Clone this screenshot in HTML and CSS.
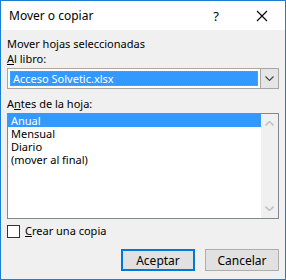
FILE: index.html
```html
<!DOCTYPE html>
<html lang="es">
<head>
    <meta charset="UTF-8">
    <title>Mover o copiar</title>
    <link rel="stylesheet" href="styles.css">
</head>
<body>
    <div class="window">
        <div class="titlebar">
            <span class="title">Mover o copiar</span>
            <span class="tb-btn">?</span>
            <span class="tb-btn">
                <svg width="12" height="12" viewBox="0 0 12 12"><path d="M1 1 L11 11 M11 1 L1 11" stroke="#000" stroke-width="1.1" fill="none"/></svg>
            </span>
        </div>
        <div class="content">
            <p class="label">Mover hojas seleccionadas</p>
            <p class="label"><u>A</u>l libro:</p>
            <div class="combo">
                <div class="combo-value"><span>Acceso Solvetic.xlsx</span></div>
                <div class="combo-arrow">
                    <svg width="9" height="5" viewBox="0 0 9 5"><path d="M0.5 0.5 L4.5 4.5 L8.5 0.5" stroke="#444" stroke-width="1.1" fill="none"/></svg>
                </div>
            </div>
            <p class="label">A<u>n</u>tes de la hoja:</p>
            <div class="listbox">
                <ul class="items">
                    <li class="selected">Anual</li>
                    <li>Mensual</li>
                    <li>Diario</li>
                    <li>(mover al final)</li>
                </ul>
                <div class="scrollbar">
                    <svg width="9" height="5" viewBox="0 0 9 5"><path d="M0.5 4.5 L4.5 0.5 L8.5 4.5" stroke="#c2c2c2" stroke-width="1.6" fill="none"/></svg>
                    <svg width="9" height="5" viewBox="0 0 9 5"><path d="M0.5 0.5 L4.5 4.5 L8.5 0.5" stroke="#c2c2c2" stroke-width="1.6" fill="none"/></svg>
                </div>
            </div>
            <label class="check">
                <span class="box"></span>
                <span><u>C</u>rear una copia</span>
            </label>
            <div class="buttons">
                <button class="btn default">Aceptar</button>
                <button class="btn">Cancelar</button>
            </div>
        </div>
    </div>
</body>
</html>
```

FILE: styles.css
```css
body {
    margin: 0;
    font-family: "Noto Sans", sans-serif;
    font-size: 11px;
    color: #000;
}

.window {
    width: 286px;
    height: 280px;
    box-sizing: border-box;
    border: 1px solid #1a7fd4;
    display: flex;
    flex-direction: column;
    background: #f0f0f0;
}

.titlebar {
    height: 29px;
    background: #fff;
    display: flex;
    align-items: center;
    font-size: 12px;
}

.title {
    flex: 1;
    padding-left: 8px;
}

.tb-btn {
    width: 46px;
    height: 29px;
    display: flex;
    align-items: center;
    justify-content: center;
    font-size: 13px;
}

.content {
    flex: 1;
    padding: 6px 6px 0 6px;
    display: flex;
    flex-direction: column;
}

.label {
    margin: 0;
    line-height: 15px;
}

.combo {
    margin-top: 2px;
    height: 21px;
    box-sizing: border-box;
    border: 1px solid #a6a6a6;
    background: #fff;
    display: flex;
}

.combo-value {
    flex: 1;
    padding: 2px;
    display: flex;
}

.combo-value span {
    flex: 1;
    background: #3399ff;
    color: #fff;
    outline: 1px dotted #d08a40;
    outline-offset: -1px;
    padding-left: 3px;
    line-height: 15px;
}

.combo-arrow {
    width: 17px;
    background: #e5e5e5;
    border-left: 1px solid #a6a6a6;
    display: flex;
    align-items: center;
    justify-content: center;
}

.combo + .label {
    margin-top: 7px;
}

.listbox {
    margin-top: 2px;
    height: 106px;
    box-sizing: border-box;
    border: 1px solid #828790;
    background: #fff;
    display: flex;
}

.items {
    flex: 1;
    list-style: none;
    margin: 0;
    padding: 0;
}

.items li {
    height: 13px;
    line-height: 13px;
    padding-left: 3px;
}

.items li.selected {
    background: #3399ff;
    color: #fff;
}

.scrollbar {
    width: 17px;
    background: #f0f0f0;
    display: flex;
    flex-direction: column;
    justify-content: space-between;
    align-items: center;
    padding: 7px 0 7px;
}

.check {
    margin-top: 5px;
    display: flex;
    align-items: center;
    gap: 5px;
    line-height: 14px;
}

.box {
    width: 11px;
    height: 11px;
    border: 1px solid #333;
    background: #fff;
}

.buttons {
    margin-top: 11px;
    display: flex;
    justify-content: flex-end;
    gap: 10px;
}

.btn {
    width: 74px;
    height: 22px;
    box-sizing: border-box;
    border: 1px solid #adadad;
    background: #e1e1e1;
    font-family: inherit;
    font-size: 12px;
    color: #000;
    padding: 0;
}

.btn.default {
    border: 2px solid #0078d7;
}
```
